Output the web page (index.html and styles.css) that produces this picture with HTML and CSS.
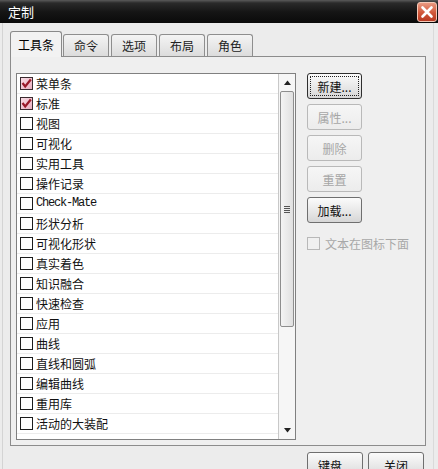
FILE: index.html
```html
<!DOCTYPE html>
<html lang="zh">
<head>
<meta charset="utf-8">
<title>定制</title>
<link rel="stylesheet" href="styles.css">
</head>
<body>
<div class="window">
  <div class="titlebar">
    <span class="title">定制</span>
    <span class="close">
      <svg width="14" height="14" viewBox="0 0 14 14"><path d="M2.5 2.5 L11.5 11.5 M11.5 2.5 L2.5 11.5" stroke="#fff" stroke-width="2.6" stroke-linecap="round"/></svg>
    </span>
  </div>
  <div class="content">
    <div class="tabs">
      <div class="tab active">工具条</div>
      <div class="tab">命令</div>
      <div class="tab">选项</div>
      <div class="tab">布局</div>
      <div class="tab">角色</div>
    </div>
    <div class="panel">
      <div class="list">
        <div class="items">
          <div class="row"><span class="cb checked"><svg width="11" height="11" viewBox="0 0 11 11"><path d="M1.5 5 L4.2 8.5 L9.8 1.5" stroke="#9a1a2a" stroke-width="2.2" fill="none"/></svg></span><span>菜单条</span></div>
          <div class="row"><span class="cb checked"><svg width="11" height="11" viewBox="0 0 11 11"><path d="M1.5 5 L4.2 8.5 L9.8 1.5" stroke="#9a1a2a" stroke-width="2.2" fill="none"/></svg></span><span>标准</span></div>
          <div class="row"><span class="cb"></span><span>视图</span></div>
          <div class="row"><span class="cb"></span><span>可视化</span></div>
          <div class="row"><span class="cb"></span><span>实用工具</span></div>
          <div class="row"><span class="cb"></span><span>操作记录</span></div>
          <div class="row"><span class="cb"></span><span class="mono">Check-Mate</span></div>
          <div class="row"><span class="cb"></span><span>形状分析</span></div>
          <div class="row"><span class="cb"></span><span>可视化形状</span></div>
          <div class="row"><span class="cb"></span><span>真实着色</span></div>
          <div class="row"><span class="cb"></span><span>知识融合</span></div>
          <div class="row"><span class="cb"></span><span>快速检查</span></div>
          <div class="row"><span class="cb"></span><span>应用</span></div>
          <div class="row"><span class="cb"></span><span>曲线</span></div>
          <div class="row"><span class="cb"></span><span>直线和圆弧</span></div>
          <div class="row"><span class="cb"></span><span>编辑曲线</span></div>
          <div class="row"><span class="cb"></span><span>重用库</span></div>
          <div class="row"><span class="cb"></span><span>活动的大装配</span></div>
        </div>
        <div class="scrollbar">
          <div class="arrow"><svg width="7" height="5" viewBox="0 0 7 5"><path d="M0 5 L3.5 0.5 L7 5 Z" fill="#222"/></svg></div>
          <div class="thumb"><span class="grip"></span></div>
          <div class="track"></div>
          <div class="arrow"><svg width="7" height="5" viewBox="0 0 7 5"><path d="M0 0 L3.5 4.5 L7 0 Z" fill="#222"/></svg></div>
        </div>
      </div>
      <div class="side">
        <div class="btn default"><span class="focus">新建...</span></div>
        <div class="btn disabled">属性...</div>
        <div class="btn disabled">删除</div>
        <div class="btn disabled">重置</div>
        <div class="btn">加载...</div>
        <div class="opt"><span class="cb dis"></span><span>文本在图标下面</span></div>
      </div>
    </div>
    <div class="footer">
      <div class="btn wide">键盘...</div>
      <div class="btn wide">关闭</div>
    </div>
  </div>
</div>
</body>
</html>
```
FILE: styles.css
```css
html, body {
  margin: 0;
  padding: 0;
}
body {
  width: 438px;
  height: 469px;
  overflow: hidden;
  background: #ececec;
  font-family: "Noto Sans CJK SC", "Noto Sans", sans-serif;
  font-size: 12px;
  color: #111;
}
.window {
  width: 438px;
  height: 469px;
  display: flex;
  flex-direction: column;
}
.titlebar {
  height: 23px;
  flex: none;
  display: flex;
  align-items: center;
  justify-content: space-between;
  padding: 0 1px 0 8px;
  background: linear-gradient(#5a5a5a 0, #2a2a2a 3px, #151515 12px, #0a0a0a 100%);
}
.title {
  color: #fff;
  font-size: 13px;
  line-height: 23px;
}
.close {
  width: 18px;
  height: 18px;
  border: 1px solid #f3c9b8;
  border-radius: 3px;
  background: linear-gradient(#e99a82, #d0573a 55%, #b83a22);
  display: flex;
  align-items: center;
  justify-content: center;
}
.content {
  flex: 1;
  min-height: 0;
  margin: 0 4px 0 2px;
  border-left: 1px solid #d4d4d4;
  border-right: 1px solid #dadada;
  padding: 9px 7px 0 7px;
  display: flex;
  flex-direction: column;
}
.tabs {
  height: 24px;
  flex: none;
  display: flex;
  align-items: flex-end;
  gap: 2px;
  position: relative;
  z-index: 1;
}
.tab {
  height: 21px;
  width: 44px;
  border: 1px solid #8e8e8e;
  border-bottom: none;
  border-radius: 3px 3px 0 0;
  background: linear-gradient(#f4f4f4, #dcdcdc);
  display: flex;
  align-items: center;
  justify-content: center;
  font-size: 12px;
  color: #222;
}
.tab.active {
  width: 50px;
  height: 25px;
  margin-bottom: -1px;
  margin-right: -1px;
  background: #f2f2f2;
  border-color: #8a8a8a;
  color: #000;
}
.panel {
  height: 372px;
  flex: none;
  border: 1px solid #8c8c8c;
  background: #efefef;
  padding: 16px 5px 0 5px;
  display: flex;
  align-items: flex-start;
}
.list {
  width: 278px;
  height: 365px;
  border: 1px solid #808080;
  background: #fff;
  display: flex;
}
.items {
  width: 261px;
  display: flex;
  flex-direction: column;
}
.row {
  height: 19px;
  border-bottom: 1px solid #ececec;
  display: flex;
  align-items: center;
  gap: 3px;
  padding-left: 3px;
  line-height: 19px;
}
.cb {
  width: 11px;
  height: 11px;
  border: 1px solid #1c1c1c;
  background: #fff;
  flex: none;
  display: flex;
  align-items: center;
  justify-content: center;
}
.cb.checked {
  background: linear-gradient(135deg, #f8dce4, #e9aebf);
  border-color: #3a2a2e;
}
.cb.dis {
  border-color: #b8b8b8;
  background: #f0f0f0;
}
.mono {
  font-family: "Liberation Mono", monospace;
  font-size: 12px;
  letter-spacing: -1.2px;
}
.scrollbar {
  width: 16px;
  border-left: 1px solid #c8c8c8;
  background: #f6f6f6;
  display: flex;
  flex-direction: column;
}
.arrow {
  height: 17px;
  flex: none;
  display: flex;
  align-items: center;
  justify-content: center;
}
.thumb {
  height: 234px;
  flex: none;
  margin: 0 1px;
  border: 1px solid #8e8e8e;
  border-radius: 2px;
  background: linear-gradient(90deg, #f4f4f4, #e0e0e0);
  display: flex;
  align-items: center;
  justify-content: center;
}
.grip {
  width: 6px;
  height: 7px;
  background: repeating-linear-gradient(#555 0 1px, transparent 1px 2px);
}
.track {
  flex: 1;
}
.side {
  margin-left: 11px;
  display: flex;
  flex-direction: column;
  gap: 5px;
}
.btn {
  width: 53px;
  height: 24px;
  border: 1px solid #6f6f6f;
  border-radius: 3px;
  background: linear-gradient(#fbfbfb, #e6e6e6 60%, #d6d6d6);
  display: flex;
  align-items: center;
  justify-content: center;
  font-size: 12px;
  color: #111;
}
.btn.default {
  border-color: #2e2e2e;
}
.focus {
  width: 47px;
  height: 18px;
  border: 1px dotted #222;
  display: flex;
  align-items: center;
  justify-content: center;
}
.btn.disabled {
  border-color: #b9b9b9;
  color: #a6a6a6;
  background: linear-gradient(#f6f6f6, #ececec);
}
.opt {
  margin-top: 7px;
  display: flex;
  align-items: center;
  gap: 5px;
  color: #a8a8a8;
}
.footer {
  margin-top: 6px;
  flex: none;
  display: flex;
  justify-content: flex-end;
  gap: 5px;
  padding-right: 2px;
}
.btn.wide {
  width: 54px;
  height: 24px;
}
```
